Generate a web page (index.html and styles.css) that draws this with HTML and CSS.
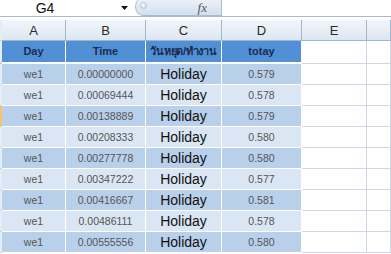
FILE: index.html
```html
<!DOCTYPE html>
<html>
<head>
<meta charset="utf-8">
<link rel="stylesheet" href="styles.css">
</head>
<body>
<div class="formula-bar">
  <div class="name-box">
    <span class="name-text">G4</span>
    <span class="name-arrow"><svg width="7" height="4" viewBox="0 0 7 4"><polygon points="0,0 7,0 3.5,4" fill="#111"/></svg></span>
  </div>
  <div class="fx-capsule">
    <span class="knob"></span>
    <span class="fx">fx</span>
  </div>
  <div class="formula-input"></div>
</div>
<div class="sheet">
  <div class="stub colhead"></div>
  <div class="colhead">A</div>
  <div class="colhead">B</div>
  <div class="colhead">C</div>
  <div class="colhead">D</div>
  <div class="colhead">E</div>
  <div class="colhead"></div>

  <div class="stub rowstub-head"></div>
  <div class="th">Day</div>
  <div class="th">Time</div>
  <div class="th th-thai">วันหยุด/ทำงาน</div>
  <div class="th">totay</div>
  <div class="empty head-empty"></div>
  <div class="empty head-empty"></div>

  <div class="stub"></div><div class="td band1">we1</div><div class="td band1">0.00000000</div><div class="td band1 hol">Holiday</div><div class="td band1">0.579</div><div class="empty"></div><div class="empty"></div>
  <div class="stub"></div><div class="td band2">we1</div><div class="td band2">0.00069444</div><div class="td band2 hol">Holiday</div><div class="td band2">0.578</div><div class="empty"></div><div class="empty"></div>
  <div class="stub stub-active"></div><div class="td band1">we1</div><div class="td band1">0.00138889</div><div class="td band1 hol">Holiday</div><div class="td band1">0.579</div><div class="empty"></div><div class="empty"></div>
  <div class="stub"></div><div class="td band2">we1</div><div class="td band2">0.00208333</div><div class="td band2 hol">Holiday</div><div class="td band2">0.580</div><div class="empty"></div><div class="empty"></div>
  <div class="stub"></div><div class="td band1">we1</div><div class="td band1">0.00277778</div><div class="td band1 hol">Holiday</div><div class="td band1">0.580</div><div class="empty"></div><div class="empty"></div>
  <div class="stub"></div><div class="td band2">we1</div><div class="td band2">0.00347222</div><div class="td band2 hol">Holiday</div><div class="td band2">0.577</div><div class="empty"></div><div class="empty"></div>
  <div class="stub"></div><div class="td band1">we1</div><div class="td band1">0.00416667</div><div class="td band1 hol">Holiday</div><div class="td band1">0.581</div><div class="empty"></div><div class="empty"></div>
  <div class="stub"></div><div class="td band2">we1</div><div class="td band2">0.00486111</div><div class="td band2 hol">Holiday</div><div class="td band2">0.578</div><div class="empty"></div><div class="empty"></div>
  <div class="stub"></div><div class="td band1">we1</div><div class="td band1">0.00555556</div><div class="td band1 hol">Holiday</div><div class="td band1">0.580</div><div class="empty"></div><div class="empty"></div>
</div>
</body>
</html>
```
FILE: styles.css
```css
* { box-sizing: border-box; }
html, body {
  margin: 0;
  padding: 0;
  width: 391px;
  height: 254px;
  overflow: hidden;
  background: #ffffff;
  font-family: "Liberation Sans", "Noto Sans", sans-serif;
}
.formula-bar {
  display: flex;
  height: 17px;
  border-bottom: 1px solid #a7b9d0;
  margin-bottom: 3px;
  overflow: hidden;
}
.name-box {
  display: flex;
  align-items: center;
  width: 135px;
  height: 16px;
}
.name-text {
  width: 90px;
  text-align: center;
  font-size: 14px;
  color: #111;
  line-height: 16px;
}
.name-arrow {
  display: flex;
  align-items: center;
  padding-left: 31px;
  padding-bottom: 1px;
}
.fx-capsule {
  position: relative;
  width: 87px;
  height: 18px;
  margin-top: -2px;
  border: 1px solid #a9bbd3;
  border-top: none;
  border-radius: 9px 0 0 9px / 10px 0 0 12px;
  background: linear-gradient(#eef3fa, #d3dfee);
  display: flex;
  align-items: center;
  justify-content: flex-end;
  padding-right: 14px;
  padding-top: 2px;
}
.knob {
  position: absolute;
  left: 4px;
  top: 4px;
  width: 7px;
  height: 7px;
  border-radius: 50%;
  background: radial-gradient(circle at 40% 35%, #ffffff, #c9d4e2);
  border: 1px solid #b7c4d6;
}
.fx {
  font-family: "Liberation Serif", serif;
  font-style: italic;
  font-size: 13px;
  color: #555;
  line-height: 14px;
}
.formula-input { flex: 1; }

.sheet {
  display: grid;
  grid-template-columns: 2px 64px 80px 76px 80px 65px 24px;
  grid-template-rows: 21px 23px repeat(9, 21px);
}
.colhead {
  background: linear-gradient(#f2f6fb, #dde6f1);
  border-right: 1px solid #9eb6ce;
  border-bottom: 1px solid #9eb6ce;
  font-size: 13px;
  color: #2a2a2a;
  display: flex;
  align-items: center;
  justify-content: center;
}
.stub {
  background: #e4ecf7;
  border-bottom: 1px solid #c5d3e5;
}
.stub.colhead { border-right: none; }
.rowstub-head { border-bottom: 2px solid #c5d3e5; }
.stub-active { background: #f6c46e; }
.th {
  background: #5290d5;
  border-right: 1px solid #ffffff;
  border-bottom: 2px solid #ffffff;
  color: #1b2c4f;
  font-weight: bold;
  font-size: 11px;
  display: flex;
  align-items: center;
  justify-content: center;
  padding-bottom: 2px;
  white-space: nowrap;
  overflow: hidden;
}
.th-thai {
  font-family: "Liberation Sans", "Noto Sans", "DejaVu Sans", sans-serif;
  letter-spacing: -0.3px;
}
.td {
  border-right: 1px solid #ffffff;
  border-bottom: 1px solid #ffffff;
  color: #555555;
  font-size: 10.5px;
  display: flex;
  align-items: center;
  justify-content: center;
}
.band1 { background: #b9d0ea; }
.band2 { background: #dae6f3; }
.hol {
  font-size: 14px;
  color: #111;
}
.empty {
  border-right: 1px solid #d0d7e5;
  border-bottom: 1px solid #d0d7e5;
  background: #fff;
}
.head-empty { border-bottom: 1px solid #d0d7e5; }
```
